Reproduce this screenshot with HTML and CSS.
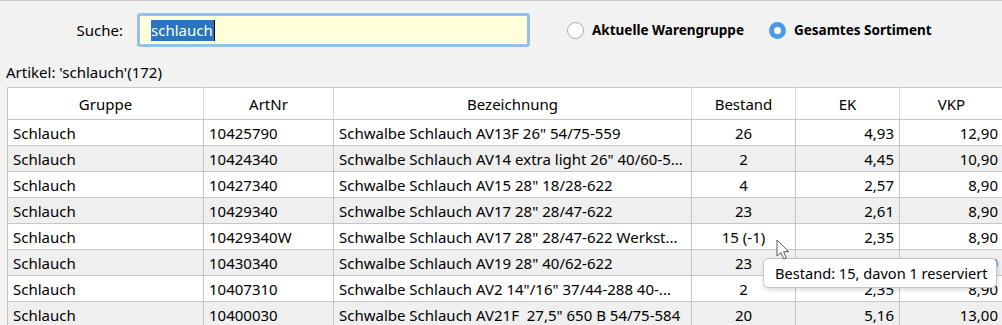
FILE: index.html
```html
<!DOCTYPE html>
<html lang="de">
<head>
    <meta charset="UTF-8">
    <title>Artikelsuche</title>
    <link rel="stylesheet" href="styles.css">
</head>
<body>
    <div class="window">
        <div class="search-bar">
            <label class="search-label" for="suche">Suche:</label>
            <div class="search-input" id="suche"><span class="selected">schlauch</span><span class="caret"></span></div>
            <div class="radio-group">
                <span class="radio"></span>
                <span class="radio-label">Aktuelle Warengruppe</span>
            </div>
            <div class="radio-group">
                <span class="radio checked"></span>
                <span class="radio-label">Gesamtes Sortiment</span>
            </div>
        </div>

        <div class="result-label">Artikel: 'schlauch'(172)</div>

        <div class="table-wrap">
            <table class="grid">
                <colgroup>
                    <col class="c-gruppe">
                    <col class="c-artnr">
                    <col class="c-bez">
                    <col class="c-bestand">
                    <col class="c-ek">
                    <col class="c-vkp">
                </colgroup>
                <thead>
                    <tr>
                        <th>Gruppe</th>
                        <th>ArtNr</th>
                        <th>Bezeichnung</th>
                        <th>Bestand</th>
                        <th>EK</th>
                        <th>VKP</th>
                    </tr>
                </thead>
                <tbody>
                    <tr>
                        <td>Schlauch</td><td>10425790</td><td>Schwalbe Schlauch AV13F 26" 54/75-559</td>
                        <td class="center">26</td><td class="num">4,93</td><td class="num">12,90</td>
                    </tr>
                    <tr>
                        <td>Schlauch</td><td>10424340</td><td>Schwalbe Schlauch AV14 extra light 26" 40/60-5...</td>
                        <td class="center">2</td><td class="num">4,45</td><td class="num">10,90</td>
                    </tr>
                    <tr>
                        <td>Schlauch</td><td>10427340</td><td>Schwalbe Schlauch AV15 28" 18/28-622</td>
                        <td class="center">4</td><td class="num">2,57</td><td class="num">8,90</td>
                    </tr>
                    <tr>
                        <td>Schlauch</td><td>10429340</td><td>Schwalbe Schlauch AV17 28" 28/47-622</td>
                        <td class="center">23</td><td class="num">2,61</td><td class="num">8,90</td>
                    </tr>
                    <tr>
                        <td>Schlauch</td><td>10429340W</td><td>Schwalbe Schlauch AV17 28" 28/47-622 Werkst...</td>
                        <td class="center">15 (-1)</td><td class="num">2,35</td><td class="num">8,90</td>
                    </tr>
                    <tr>
                        <td>Schlauch</td><td>10430340</td><td>Schwalbe Schlauch AV19 28" 40/62-622</td>
                        <td class="center">23</td><td class="num">2,66</td><td class="num">8,90</td>
                    </tr>
                    <tr>
                        <td>Schlauch</td><td>10407310</td><td>Schwalbe Schlauch AV2 14"/16" 37/44-288 40-...</td>
                        <td class="center">2</td><td class="num">2,35</td><td class="num">8,90</td>
                    </tr>
                    <tr>
                        <td>Schlauch</td><td>10400030</td><td>Schwalbe Schlauch AV21F&nbsp; 27,5" 650 B 54/75-584</td>
                        <td class="center">20</td><td class="num">5,16</td><td class="num">13,00</td>
                    </tr>
                </tbody>
            </table>

            <div class="tooltip">Bestand: 15, davon 1 reserviert</div>
            <svg class="cursor" width="14" height="22" viewBox="0 0 14 22">
                <path d="M1 1 L1 17 L5 13.5 L7.8 20 L10.3 19 L7.6 12.6 L12.6 12.6 Z" fill="#ffffff" stroke="#5a5a5a" stroke-width="1" stroke-linejoin="round"/>
            </svg>
        </div>
    </div>
</body>
</html>
```

FILE: styles.css
```css
body {
    margin: 0;
    padding: 0;
    font-family: "Noto Sans", "Open Sans", sans-serif;
    font-size: 15px;
    color: #000;
    background-color: #f2f2f2;
    overflow: hidden;
}
.window {
    width: 1002px;
    height: 325px;
    border-top: 1px solid #c9c9c9;
    box-sizing: border-box;
    overflow: hidden;
}
.search-bar {
    display: flex;
    align-items: center;
    height: 34px;
    margin-top: 12px;
}
.search-label {
    width: 123px;
    text-align: right;
    margin-right: 14px;
}
.search-input {
    width: 393px;
    height: 34px;
    box-sizing: border-box;
    border: 3px solid #97c0e8;
    border-radius: 3px;
    background-color: #ffffd9;
    display: flex;
    align-items: center;
    padding-left: 11px;
    font-size: 15px;
}
.search-input .selected {
    background-color: #2b74c0;
    color: #fff;
    line-height: 21px;
    padding-right: 1px;
}
.search-input .caret {
    width: 1px;
    height: 21px;
    background-color: #000;
}
.radio-group {
    display: flex;
    align-items: center;
    margin-left: 37px;
}
.radio-group + .radio-group {
    margin-left: 25px;
}
.radio {
    width: 17px;
    height: 17px;
    box-sizing: border-box;
    border: 1px solid #a8a8a8;
    border-radius: 50%;
    background-color: #fff;
    margin-right: 8px;
}
.radio.checked {
    border: 5px solid #4b9ae6;
    background-color: #fff;
}
.radio-label {
    font-weight: bold;
    font-size: 13.5px;
}
.result-label {
    margin-top: 15px;
    margin-left: 6px;
    height: 20px;
    line-height: 20px;
}
.table-wrap {
    position: relative;
    margin-top: 5px;
    margin-left: 7px;
}
.grid {
    border-collapse: collapse;
    table-layout: fixed;
    width: 996px;
    background-color: #fff;
    border: 1px solid #c6c6c6;
    border-right: none;
}
.c-gruppe { width: 196px; }
.c-artnr { width: 130px; }
.c-bez { width: 358px; }
.c-bestand { width: 104px; }
.c-ek { width: 104px; }
.c-vkp { width: 104px; }
.grid th {
    font-weight: normal;
    height: 31px;
    padding: 0 4px;
    border-right: 1px solid #d6d6d6;
    border-bottom: 1px solid #c6c6c6;
    text-align: center;
}
.grid td {
    height: 25px;
    padding: 0 5px;
    border-right: 1px solid #c6c6c6;
    border-bottom: 1px solid #c6c6c6;
    white-space: nowrap;
    overflow: hidden;
}
.grid tbody tr:nth-child(even) td {
    background-color: #efefef;
}
.grid td.center {
    text-align: center;
}
.grid td.num {
    text-align: right;
}
.tooltip {
    position: absolute;
    left: 756px;
    top: 171px;
    height: 30px;
    box-sizing: border-box;
    padding: 0 8px 0 11px;
    line-height: 28px;
    font-size: 14.6px;
    background-color: #fff;
    border: 1px solid #c4c4c4;
    border-radius: 5px;
    box-shadow: 1px 2px 4px rgba(0, 0, 0, 0.15);
    white-space: nowrap;
}
.cursor {
    position: absolute;
    left: 769px;
    top: 152px;
}
```
